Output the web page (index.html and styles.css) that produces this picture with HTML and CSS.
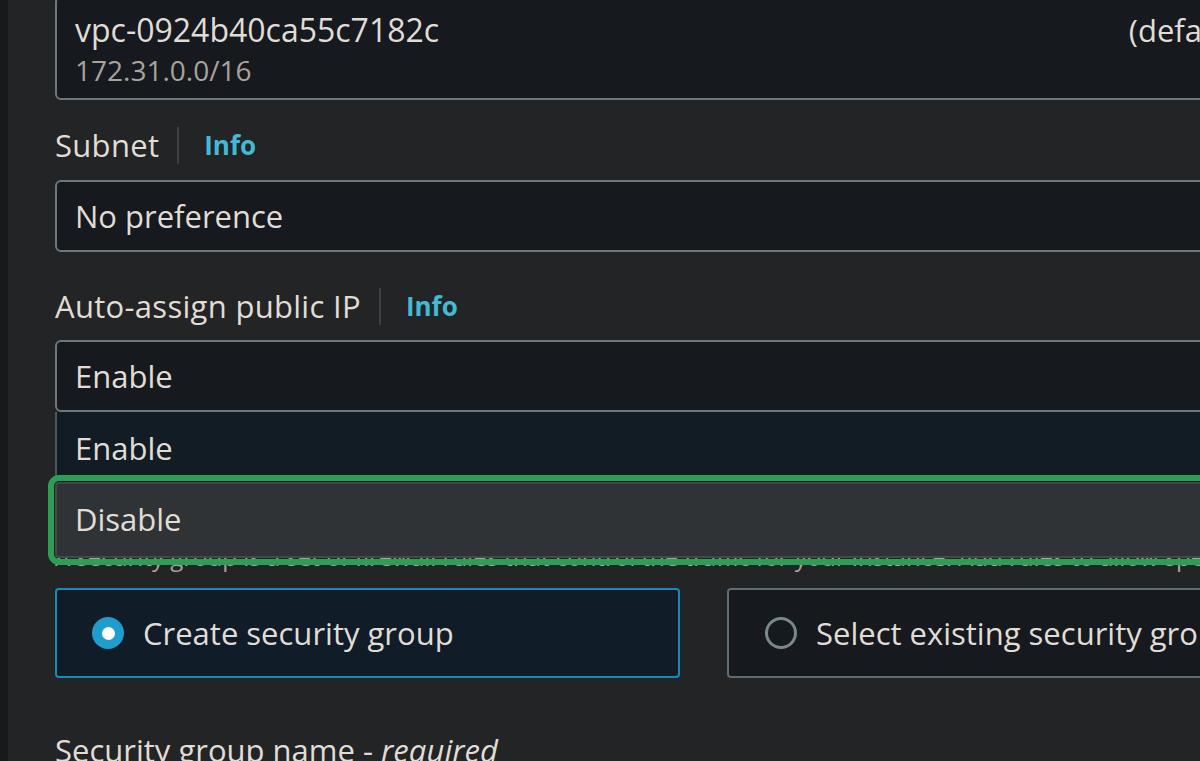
FILE: index.html
```html
<!DOCTYPE html>
<html lang="en">
<head>
<meta charset="utf-8">
<title>Network settings</title>
<link rel="stylesheet" href="styles.css">
</head>
<body>
<div class="page">
  <div class="strip"></div>
  <div class="main">
    <div class="form">
      <div class="vpc-box">
        <div class="vpc-text">
          <div class="vpc-id">vpc-0924b40ca55c7182c</div>
          <div class="vpc-cidr">172.31.0.0/16</div>
        </div>
        <div class="vpc-default">(default)</div>
      </div>

      <div class="label-row">
        <span class="label">Subnet</span>
        <span class="sep"></span>
        <span class="info">Info</span>
      </div>
      <div class="select">No preference</div>

      <div class="label-row label-row-2">
        <span class="label">Auto-assign public IP</span>
        <span class="sep"></span>
        <span class="info">Info</span>
      </div>
      <div class="select-wrap">
        <div class="select">Enable</div>
        <div class="dropdown">
          <div class="option option-enable">Enable</div>
          <div class="option option-disable">Disable</div>
        </div>
      </div>

      <p class="desc">A security group is a set of firewall rules that control the traffic for your instance. Add rules to allow specific traffic to reach your instance.</p>

      <div class="cards">
        <div class="card card-selected">
          <span class="radio radio-on"></span>
          <span class="card-text">Create security group</span>
        </div>
        <div class="card">
          <span class="radio"></span>
          <span class="card-text">Select existing security group</span>
        </div>
      </div>

      <div class="name-label">Security group name - <em>required</em></div>
    </div>
  </div>
</div>
</body>
</html>
```

FILE: styles.css
```css
html, body {
  margin: 0;
  padding: 0;
  background: #232425;
  overflow: hidden;
  height: 100%;
}

body {
  font-family: "Open Sans", "Noto Sans", sans-serif;
  font-weight: 500;
  color: #e0ddd6;
}

.page {
  display: flex;
  height: 761px;
}

.strip {
  width: 8px;
  flex: none;
  background: #18191b;
}

.main {
  flex: 1;
  padding-left: 47px;
  overflow: hidden;
}

.form {
  width: 1214px;
}

.vpc-box {
  margin-top: -4px;
  height: 104px;
  box-sizing: border-box;
  border: 2px solid #6c787d;
  border-radius: 6px;
  background: #16191d;
  display: flex;
  justify-content: space-between;
  align-items: flex-start;
  padding: 12px 18px 0 18px;
}

.vpc-id {
  font-size: 32px;
  line-height: 40px;
}

.vpc-cidr {
  font-size: 28px;
  line-height: 32px;
  margin-top: 4px;
  color: #a8a39c;
}

.vpc-default {
  font-size: 31px;
  line-height: 40px;
}

.label-row {
  display: flex;
  align-items: center;
  height: 40px;
  margin-top: 25px;
  margin-bottom: 15px;
}

.label-row-2 {
  margin-top: 34px;
  margin-bottom: 14px;
}

.label {
  font-size: 31px;
  line-height: 40px;
  letter-spacing: 0.3px;
}

.sep {
  width: 2px;
  height: 37px;
  background: #3b4046;
  margin: 0 25px 0 18px;
}

.info {
  font-size: 26px;
  font-weight: 700;
  color: #44b9d6;
}

.select {
  height: 72px;
  box-sizing: border-box;
  border: 2px solid #6c787d;
  border-radius: 6px;
  background: #16191d;
  padding-left: 18px;
  font-size: 31px;
  line-height: 68px;
}

.select-wrap {
  position: relative;
}

.dropdown {
  position: absolute;
  top: 72px;
  left: 0;
  right: 0;
  z-index: 2;
}

.option {
  box-sizing: border-box;
  padding-left: 18px;
  font-size: 31px;
}

.option-enable {
  height: 70px;
  line-height: 72px;
  background: #111c25;
  border-left: 2px solid #4d575d;
}

.option-disable {
  height: 76px;
  line-height: 70px;
  background: #303335;
  border: 2px solid #43484c;
  border-radius: 4px;
  outline: 6px solid #2c9f55;
  outline-offset: 1px;
}

.desc {
  margin: 129px 0 0 0;
  font-size: 24px;
  line-height: 32px;
  color: #a8a39c;
  white-space: nowrap;
}

.cards {
  display: grid;
  grid-template-columns: 625px 1fr;
  column-gap: 47px;
  margin-top: 15px;
}

.card {
  height: 90px;
  box-sizing: border-box;
  border: 2px solid #5f6b72;
  border-radius: 4px;
  background: #16191d;
  display: flex;
  align-items: center;
  padding-left: 36px;
}

.card-selected {
  border-color: #1a88ba;
  background: #101c27;
  padding-left: 35px;
}

.radio {
  width: 32px;
  height: 32px;
  box-sizing: border-box;
  border-radius: 50%;
  border: 3px solid #7b888b;
  background: #161a1e;
  flex: none;
  display: flex;
  align-items: center;
  justify-content: center;
}

.radio-on {
  border: none;
  background: #1f9dcc;
}

.radio-on::after {
  content: "";
  width: 13px;
  height: 13px;
  border-radius: 50%;
  background: #ffffff;
}

.card-text {
  margin-left: 19px;
  font-size: 31px;
  line-height: 40px;
  white-space: nowrap;
}

.name-label {
  margin-top: 52px;
  font-size: 31px;
  line-height: 40px;
}

.name-label em {
  font-style: italic;
}
```
